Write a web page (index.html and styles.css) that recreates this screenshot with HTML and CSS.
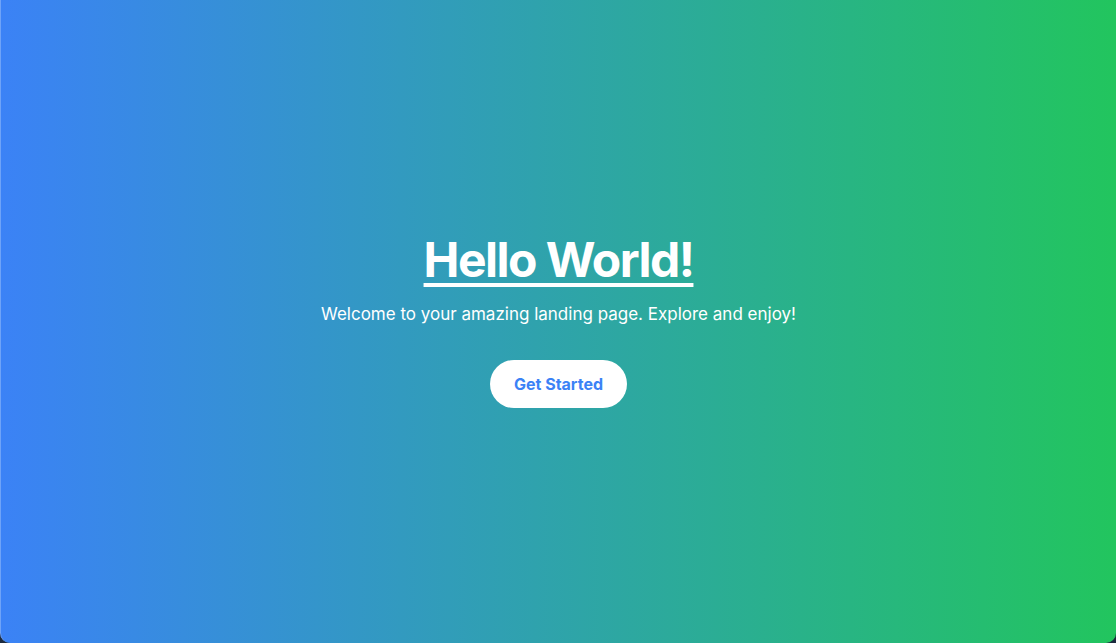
FILE: index.html
```html
<!DOCTYPE html>
<html lang="en">
<head>
<meta charset="utf-8">
<title>Hello World</title>
<link rel="stylesheet" href="styles.css">
</head>
<body>
<main class="hero">
  <h1 class="title">Hello World!</h1>
  <p class="subtitle">Welcome to your amazing landing page. Explore and enjoy!</p>
  <button class="cta">Get Started</button>
</main>
</body>
</html>
```
FILE: styles.css
```css
html, body {
  margin: 0;
  padding: 0;
  height: 100%;
  background: #1c2a3e;
}
body {
  font-family: Inter, "Noto Sans", sans-serif;
}
.hero {
  height: 643px;
  box-sizing: border-box;
  display: flex;
  flex-direction: column;
  align-items: center;
  justify-content: center;
  background: linear-gradient(to right, #3b82f6, #22c55e);
  border-radius: 0 0 10px 10px;
  border-left: 1px solid #6ea3f8;
  color: #fff;
}
.title {
  margin: 0 0 16px;
  font-size: 48px;
  line-height: 48px;
  font-weight: 700;
  text-decoration: underline;
  text-decoration-thickness: 4px;
  text-underline-offset: 6px;
  letter-spacing: -1.5px;
}
.subtitle {
  margin: 0 0 32px;
  font-size: 17px;
  line-height: 28px;
}
.cta {
  height: 48px;
  padding: 0 24px;
  border: none;
  border-radius: 9999px;
  background: #fff;
  color: #3b82f6;
  font-family: inherit;
  font-size: 16px;
  font-weight: 700;
  cursor: pointer;
}
```
